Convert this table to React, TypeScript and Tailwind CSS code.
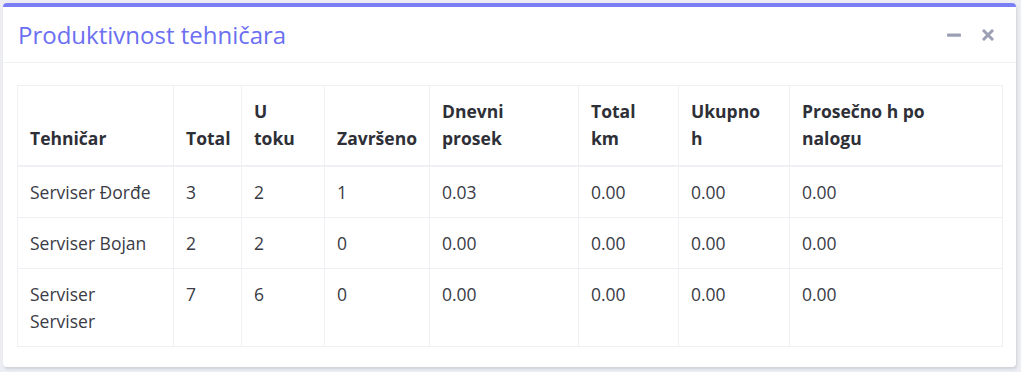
import React from "react";

const rows: React.ReactNode[][] = [
  ["Serviser Đorđe", "3", "2", "1", "0.03", "0.00", "0.00", "0.00"],
  ["Serviser Bojan", "2", "2", "0", "0.00", "0.00", "0.00", "0.00"],
  [<>Serviser<br />Serviser</>, "7", "6", "0", "0.00", "0.00", "0.00", "0.00"],
];

const heads: React.ReactNode[] = [
  "Tehničar",
  "Total",
  <>U<br />toku</>,
  "Završeno",
  <>Dnevni<br />prosek</>,
  <>Total<br />km</>,
  <>Ukupno<br />h</>,
  <>Prosečno h po<br />nalogu</>,
];
const widths = [156, 68, 83, 105, 149, 100, 111, 213];

export default function App() {
  return (
    <div className="w-[1021px] h-[372px] bg-[#eceef4] p-[3px]" style={{ fontFamily: '"Open Sans", "Noto Sans", sans-serif' }}>
      <div className="w-[1013px] h-[364px] bg-white rounded-[4px] border-t-4 border-[#7b7ff6] shadow-[1px_2px_3px_rgba(0,0,0,0.12)] flex flex-col">
        <div className="h-[56px] flex items-center justify-between pl-[15px] pr-[22px] border-b border-[#eef0f3]">
          <h2 className="text-[24px] text-[#6b6ff2] leading-none">Produktivnost tehničara</h2>
          <div className="flex items-center gap-[21px] text-[#9ca0b4]">
            <svg width="14" height="14" viewBox="0 0 14 14"><rect x="0" y="5.5" width="14" height="3.2" rx="0.8" fill="currentColor" /></svg>
            <svg width="12" height="12" viewBox="0 0 12 12"><path d="M2 2L10 10M10 2L2 10" stroke="currentColor" strokeWidth="3" strokeLinecap="square" /></svg>
          </div>
        </div>
        <div className="px-[14px] pt-[22px]">
          <table className="table-fixed border-collapse w-[985px] text-[17.5px] text-[#3a3b45] leading-[27px]">
            <colgroup>
              {widths.map((w, i) => (
                <col key={i} style={{ width: w }} />
              ))}
            </colgroup>
            <thead>
              <tr>
                {heads.map((h, i) => (
                  <th key={i} className="align-bottom text-left font-bold px-[12px] pt-[12px] pb-[13px] border border-[#eef0f3] border-b-2 text-[#2e2f37] whitespace-nowrap">
                    {h}
                  </th>
                ))}
              </tr>
            </thead>
            <tbody>
              {rows.map((r, ri) => (
                <tr key={ri}>
                  {r.map((c, i) => (
                    <td key={i} className="align-top px-[12px] pt-[12px] pb-[11px] border border-[#eef0f3] font-normal whitespace-nowrap">
                      {c}
                    </td>
                  ))}
                </tr>
              ))}
            </tbody>
          </table>
        </div>
      </div>
    </div>
  );
}
